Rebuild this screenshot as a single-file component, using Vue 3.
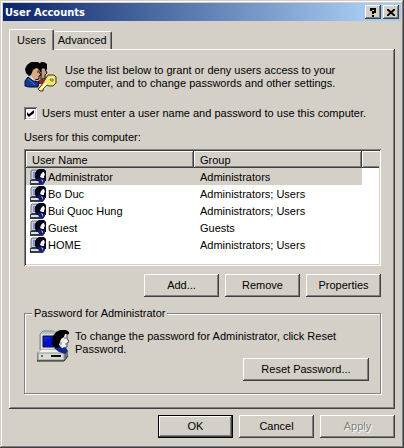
<template>
	<main class="dialog">
		<header class="titleBar">
			<h1>User Accounts</h1>
			<button type="button" class="titleButton" aria-label="Help">
				<svg width="8" height="9" viewBox="0 0 8 9" fill="none" stroke="#000" stroke-width="2">
					<path d="M2 3V1H6V4H4V6M3 8H5" />
				</svg>
			</button>
			<button type="button" class="titleButton" aria-label="Close">
				<svg width="8" height="7" viewBox="0 0 8 7" fill="none" stroke="#000" stroke-width="2">
					<path d="M0 0L8 7M8 0L0 7" />
				</svg>
			</button>
		</header>

		<div class="tabs" role="tablist">
			<button
				v-for="tab in tabs"
				:key="tab"
				type="button"
				role="tab"
				class="tab"
				:class="{ active: tab === activeTab }"
				:aria-selected="tab === activeTab"
				@click="activeTab = tab"
			>{{ tab }}</button>
		</div>

		<section class="panel">
			<div class="intro">
				<svg width="34" height="32" viewBox="0 0 34 32">
					<path d="M15 4L17 1H20L23 3V8L21 11H16Z" fill="#000" />
					<path d="M17 7H21L22 10L23 12L21 14V18H17Z" fill="#c49a7c" stroke="#000" />
					<path d="M14 20L18 17L22 19V23H14Z" fill="#8c2630" />
					<path d="M1 8L3 4L7 1H14L18 4V8L15 9L11 8L10 13L5 15L2 12Z" fill="#000" />
					<path d="M9 9L12 7L15 8V11L17 14L15 15V18L12 19L9 17L7 14Z" fill="#dba982" />
					<path d="M15 8V11L17 14L15 15V18L11 19M13 11H14" fill="none" stroke="#000" />
					<path d="M1 20L4 16L9 20L15 21L14 26H5L1 25Z" fill="#123a93" stroke="#050a30" />
					<path d="M4 18L9 22L11 24" fill="none" stroke="#4b78d0" />
					<path d="M22 17L24 14H30L32 16V22L29 25H25L23 24L19 28V30H16L14 28L17 25Z" fill="#f3e46c" stroke="#3b3700" />
					<path d="M25 17H29M23 22L17 28" stroke="#fffdcf" stroke-width="2" />
					<path d="M26 18H29V20H27Z" fill="#fff" stroke="#776b10" />
				</svg>
				<p>Use the list below to grant or deny users access to your computer, and to change passwords and other settings.</p>
			</div>

			<label class="check">
				<input v-model="mustLogin" type="checkbox" />
				<span>Users must enter a user name and password to use this computer.</span>
			</label>

			<p id="listLabel" class="listLabel">Users for this computer:</p>
			<div class="userList">
				<table aria-labelledby="listLabel">
					<colgroup>
						<col class="mainCol" />
						<col class="mainCol" />
						<col />
					</colgroup>
					<thead>
						<tr>
							<th>User Name</th>
							<th>Group</th>
							<th></th>
						</tr>
					</thead>
					<tbody>
						<tr
							v-for="user in users"
							:key="user.name"
							:class="{ selected: user.name === selected }"
							@click="selected = user.name"
						>
							<td>
								<div class="userName">
									<svg width="16" height="16" viewBox="0 0 16 16">
										<path d="M1 2L2 1H9V10H1Z" fill="#c9d0da" />
										<path d="M1 10V2L2 1H7" fill="none" stroke="#687078" />
										<path d="M3 3H8V9H3Z" fill="#7f92c4" />
										<path d="M0 11L2 10H13L15 9V13L13 16H0Z" fill="#35394a" />
										<path d="M1 12H11V14H1Z" fill="#dce0dc" />
										<path d="M5 4L7 1L9 0H14L16 2V12H14L11 10L7 12L5 9Z" fill="#05051c" />
										<path d="M11 5L13 3H14L15 6L14 7V9H12L10 8Z" fill="#f4f4fa" />
										<path d="M7 10L10 9L12 11L15 10V13L12 15L9 14Z" fill="#101c75" />
										<path d="M11 10L13 11V14Z" fill="#aeb8dc" />
									</svg>
									<span>{{ user.name }}</span>
								</div>
							</td>
							<td>{{ user.group }}</td>
							<td></td>
						</tr>
					</tbody>
				</table>
			</div>

			<div class="buttons">
				<button type="button" class="button">Add...</button>
				<button type="button" class="button">Remove</button>
				<button type="button" class="button">Properties</button>
			</div>

			<fieldset>
				<legend>Password for {{ selected }}</legend>
				<div class="password">
					<svg width="32" height="32" viewBox="0 0 32 32">
						<path d="M3 4L6 1H21L23 3V18L20 21H3Z" fill="#b9bec0" />
						<path d="M3 20V4L6 1H17" fill="none" stroke="#82888a" />
						<path d="M4 4H19V19H4Z" fill="#dcdfda" />
						<path d="M6 6H17V17H6Z" fill="#0510c4" stroke="#11163a" />
						<path d="M7 8H13M7 10H10" stroke="#2038f0" />
						<path d="M0 23L4 20H30L31 21V26L27 31H0Z" fill="#6f7374" />
						<path d="M1 23L4 20H30L27 23Z" fill="#f3f3ec" />
						<path d="M1 23H27V30H1Z" fill="#d9dcd5" stroke="#8d9394" />
						<path d="M14 26H24" stroke="#111" stroke-width="2" />
						<path d="M4 26H6" stroke="#3a8a42" stroke-width="2" />
						<path d="M0 31H27L31 26" fill="none" stroke="#222" />
						<path d="M17 18L22 15L25 18L29 18L31 21L28 24L22 22Z" fill="#14278d" />
						<path d="M15 14L16 6L19 2L23 0H29L32 2V4L29 5L27 7L26 12L22 17L18 18Z" fill="#000" />
						<path d="M24 9L27 7L28 4H30V8L32 12L30 13V17L26 18L22 15Z" fill="#f1f0ee" />
						<path d="M30 4V8L32 12L30 13V17L26 18" fill="none" stroke="#444" />
						<path d="M27 8H30M28 14H30M24 12V15" stroke="#777" />
					</svg>
					<p>To change the password for {{ selected }}, click Reset Password.</p>
					<button type="button" class="button reset">Reset Password...</button>
				</div>
			</fieldset>
		</section>

		<footer class="buttons footer">
			<button type="button" class="button default">OK</button>
			<button type="button" class="button">Cancel</button>
			<button type="button" class="button" disabled>Apply</button>
		</footer>
	</main>
</template>

<script setup>
import { ref } from 'vue';

const tabs = ['Users', 'Advanced'];
const activeTab = ref('Users');
const mustLogin = ref(true);
const selected = ref('Administrator');

const users = ref([
	{ name: 'Administrator', group: 'Administrators' },
	{ name: 'Bo Duc', group: 'Administrators; Users' },
	{ name: 'Bui Quoc Hung', group: 'Administrators; Users' },
	{ name: 'Guest', group: 'Guests' },
	{ name: 'HOME', group: 'Administrators; Users' },
]);
</script>

<style>
body {
	background: #d4d0c8;
}
</style>

<style scoped>
.dialog {
	box-sizing: border-box;
	padding: 3px 3px 10px;
	background: #d4d0c8;
	box-shadow: inset -1px -1px #404040, inset 1px 1px #d4d0c8, inset -2px -2px #808080, inset 2px 2px #fff;
	color: #000;
	font: 11px/13px "Liberation Sans", Arial, sans-serif;
}

button {
	font: inherit;
	color: inherit;
	border: 0;
	padding: 0;
	background: #d4d0c8;
}

p {
	margin: 0;
}

svg {
	display: block;
	flex: none;
}

.titleBar {
	display: flex;
	align-items: center;
	gap: 2px;
	height: 18px;
	padding: 0 2px;
	background: linear-gradient(to right, #0a246a, #a6caf0 calc(100% - 36px));
}

.titleBar h1 {
	flex: 1;
	margin: 0;
	color: #fff;
	font: bold 11px/13px "DejaVu Sans Condensed", "DejaVu Sans", sans-serif;
}

.titleButton {
	display: flex;
	align-items: center;
	justify-content: center;
	width: 16px;
	height: 14px;
	box-shadow: inset -1px -1px #404040, inset 1px 1px #fff, inset -2px -2px #808080;
}

.tabs {
	display: flex;
	align-items: flex-end;
	padding: 8px 6px 0;
}

.tab {
	height: 18px;
	padding: 0 4px;
	border-top: 1px solid #fff;
	border-right: 1px solid #404040;
	border-radius: 2px 2px 0 0;
	box-shadow: inset -1px 0 #808080;
}

.tab.active {
	position: relative;
	height: 21px;
	margin-bottom: -1px;
	padding: 0 7px;
	border-left: 1px solid #fff;
}

.panel {
	margin: 0 6px;
	padding: 12px 14px 15px 15px;
	box-shadow: inset -1px -1px #404040, inset 1px 1px #fff, inset -2px -2px #808080;
}

.intro {
	display: flex;
	gap: 7px;
}

.intro p {
	max-width: 280px;
	padding-top: 3px;
}

.check {
	display: flex;
	align-items: center;
	gap: 5px;
	margin-top: 14px;
}

.check input {
	appearance: none;
	display: grid;
	place-items: center;
	width: 13px;
	height: 13px;
	margin: 0;
	background: #fff;
	box-shadow: inset 1px 1px #808080, inset -1px -1px #fff, inset 2px 2px #404040, inset -2px -2px #d4d0c8;
}

.check input:checked::before {
	content: "";
	width: 7px;
	height: 7px;
	background: #000;
	clip-path: polygon(0 28%, 28% 57%, 100% 0, 100% 42%, 28% 100%, 0 71%);
}

.listLabel {
	margin-top: 11px;
}

.userList {
	margin-top: 5px;
	padding: 2px 2px 13px;
	background: #fff;
	box-shadow: inset 1px 1px #808080, inset -1px -1px #fff, inset 2px 2px #404040, inset -2px -2px #d4d0c8;
}

table {
	width: 100%;
	table-layout: fixed;
	border-collapse: collapse;
}

.mainCol {
	width: 168px;
}

th,
td {
	box-sizing: border-box;
	height: 17px;
	padding: 2px 6px 0;
	font-weight: normal;
	text-align: left;
	white-space: nowrap;
}

th {
	background: #d4d0c8;
	box-shadow: inset -1px -1px #404040, inset 1px 1px #fff, inset -2px -2px #808080;
}

th:last-child {
	box-shadow: inset 0 -1px #404040, inset 1px 1px #fff, inset 0 -2px #808080;
}

td:first-child {
	padding: 0 4px;
}

.userName {
	display: flex;
	align-items: center;
	gap: 2px;
}

.userName span {
	padding-top: 2px;
}

.selected td:not(:last-child) {
	background: #d4d0c8;
}

.buttons {
	display: flex;
	justify-content: flex-end;
	gap: 6px;
	margin-top: 8px;
}

.button {
	min-width: 75px;
	height: 23px;
	padding: 0 8px;
	box-shadow: inset -1px -1px #404040, inset 1px 1px #fff, inset -2px -2px #808080;
}

.button.default {
	border: 1px solid #000;
}

.button:disabled {
	color: #808080;
	text-shadow: 1px 1px #fff;
}

.footer {
	margin: 6px 6px 0;
}

fieldset {
	min-width: 0;
	margin: 10px 0 0;
	padding: 10px 11px 12px 12px;
	border: 1px solid #808080;
	box-shadow: inset 1px 1px #fff, 1px 1px #fff;
}

legend {
	margin-left: -5px;
	padding: 0 2px;
	background: #d4d0c8;
}

.password {
	display: grid;
	grid-template-columns: 32px 1fr;
	gap: 2px 6px;
}

.password svg {
	grid-row: span 2;
}

.reset {
	justify-self: end;
	width: 126px;
}
</style>
